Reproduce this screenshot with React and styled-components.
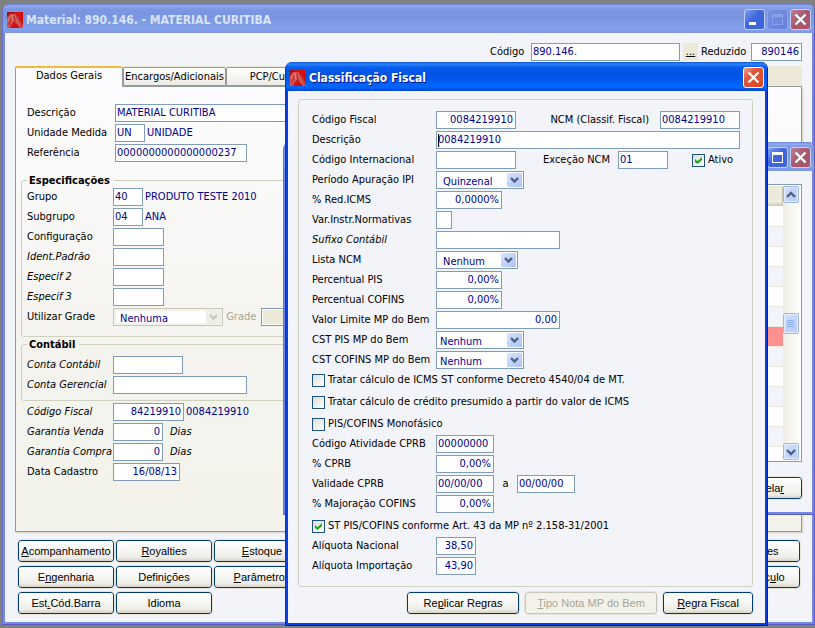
import React from "react";
import styled, { createGlobalStyle, css } from "styled-components";

const GlobalStyle = createGlobalStyle`
  * {
    box-sizing: border-box;
  }

  body {
    margin: 0;
    background: #808080;
    color: #000;
    font: 11px/18px "DejaVu Sans Condensed", "DejaVu Sans", sans-serif;
  }

  input, select, button {
    font: inherit;
    margin: 0;
  }
`;

const Desktop = styled.div`
  position: relative;
  min-height: 100vh;
  overflow: hidden;
`;

const activeFrame = css`
  background: #0a3fe0;
  border-color: #0831d9 #001ea0 #001ea0 #0831d9;
`;

const inactiveFrame = css`
  background: #7489e0;
  border-color: #7b8ee0 #5a5cc0 #5a5cc0 #6a72cc;
`;

const WindowFrame = styled.section`
  position: absolute;
  top: ${(p) => p.$top}px;
  left: ${(p) => p.$left}px;
  right: ${(p) => p.$right}px;
  border-style: solid;
  border-width: 0 1px 1px 1px;
  padding: 0 2px 2px 2px;
  border-radius: 7px 7px 0 0;
  ${(p) => (p.$active ? activeFrame : inactiveFrame)}
`;

const TitleBar = styled.header`
  display: flex;
  align-items: center;
  gap: 2px;
  height: 29px;
  margin: 0 -2px;
  padding: 2px 3px 0 4px;
  border-radius: 6px 6px 0 0;
  color: ${(p) => (p.$active ? "#fff" : "#d8e4f8")};
  text-shadow: ${(p) => (p.$active ? "1px 1px 0 #0f1089" : "none")};
  background: ${(p) =>
    p.$active
      ? "linear-gradient(#0a4fd0 0, #2a86f8 2px, #0a5ff0 5px, #0054e3 10px, #0058ea 17px, #0066ff 24px, #0062f5 26px, #0042c8 29px)"
      : "linear-gradient(#6a80d8 0, #93aaee 2px, #7f97e2 5px, #7a94df 12px, #7f9ce6 19px, #84a4ea 24px, #7f96e6 29px)"};
`;

const WindowTitle = styled.h1`
  flex: 1;
  margin: 0 0 0 1px;
  font-size: 12px;
  font-weight: bold;
  white-space: nowrap;
`;

const WindowBody = styled.div`
  background: #f3f3fa;
  padding: ${(p) => p.$pad};
`;

const captionColors = {
  blue: "linear-gradient(135deg, #7f9ff4, #3f66dc 45%, #3a62dc)",
  faded: "linear-gradient(135deg, #7890e4, #6680dc)",
  dull: "linear-gradient(135deg, #bd7f98, #a8566a 50%, #a8586c)",
  red: "linear-gradient(135deg, #f0a088, #e0553a 35%, #da4420)",
};

const CaptionButton = styled.button`
  display: block;
  width: 21px;
  height: 21px;
  padding: 0;
  border: 1px solid ${(p) => (p.$tone === "faded" ? "#8ea4ea" : p.$tone === "red" ? "#fff" : "#c3cff5")};
  border-radius: 3px;
  background: ${(p) => captionColors[p.$tone]};

  svg {
    display: block;
  }
`;

const Field = styled.input`
  display: block;
  flex: none;
  width: ${(p) => (p.$width ? `${p.$width}px` : "auto")};
  ${(p) => p.$grow && "flex: 1; min-width: 0;"}
  height: 18px;
  padding: 0 2px 0 1px;
  border: 1px solid #7f9db9;
  border-radius: 0;
  outline: none;
  background: ${(p) => (p.disabled ? "#ece9d8" : "#fff")};
  ${(p) => p.disabled && "box-shadow: inset 0 0 0 1px #fff;"}
  ${(p) =>
    p.$caret &&
    "background: linear-gradient(90deg, #000 1px, #f0e040 1px) 1px 2px / 2px 13px no-repeat #fff;"}
  color: #000090;
  text-align: ${(p) => (p.$end ? "right" : "left")};
`;

const Label = styled.label`
  flex: none;
  width: ${(p) => (p.$width ? `${p.$width}px` : "auto")};
  font-style: ${(p) => (p.$italic ? "italic" : "normal")};
  color: ${(p) => (p.$muted ? "#a5a596" : "#000")};
  white-space: nowrap;
`;

const Value = styled.span`
  margin-left: 2px;
  color: #000090;
  white-space: nowrap;
`;

const Unit = styled.span`
  margin-left: 7px;
  font-style: italic;
`;

const RangeWord = styled.label`
  width: 23px;
  text-align: center;
`;

const Row = styled.div`
  display: flex;
  align-items: center;
  height: 18px;
`;

const Stack = styled.div`
  display: flex;
  flex-direction: column;
  gap: 2px;
`;

const SelectBox = styled.span`
  position: relative;
  flex: none;
  width: ${(p) => p.$width}px;
  height: 18px;

  select {
    appearance: none;
    display: block;
    width: 100%;
    height: 18px;
    padding: 1px 18px 0 ${(p) => p.$indent}px;
    border: 1px solid ${(p) => (p.$off ? "#c9c7ba" : "#7f9db9")};
    border-radius: 0;
    outline: none;
    background: #fff;
    ${(p) => p.$off && "box-shadow: inset 0 0 0 2px #f2f1ea;"}
    color: #000090;
    opacity: 1;
  }

  svg {
    position: absolute;
    top: 2px;
    right: 2px;
    pointer-events: none;
  }
`;

const CheckLabel = styled.label`
  display: flex;
  align-items: center;
  gap: 3px;
  height: 18px;
  margin-top: ${(p) => (p.$spaced ? 2 : 0)}px;
  margin-left: ${(p) => (p.$width ? 16 : 0)}px;
  width: ${(p) => (p.$width ? `${p.$width}px` : "auto")};
  white-space: nowrap;
`;

const CheckMark = styled.span`
  position: relative;
  flex: none;
  width: 13px;
  height: 13px;

  input {
    appearance: none;
    display: block;
    width: 13px;
    height: 13px;
    border: 1px solid #1c5180;
    background: linear-gradient(135deg, #dcdcd7, #fff);
  }

  svg {
    position: absolute;
    top: 3px;
    left: 3px;
    display: none;
    pointer-events: none;
  }

  input:checked + svg {
    display: block;
  }
`;

const PushButton = styled.button`
  width: ${(p) => (p.$width ? `${p.$width}px` : "auto")};
  height: 22px;
  padding: 0;
  border: 1px solid ${(p) => (p.disabled ? "#c9c7ba" : "#003c74")};
  border-radius: 3px;
  outline: 1px solid #e6e3d8;
  background: ${(p) =>
    p.disabled ? "#f3f2ea" : "linear-gradient(#fff, #f3f3ef 60%, #ecebe6 85%, #d6d0c5)"};
  color: ${(p) => (p.disabled ? "#a5a596" : "#000")};
  font: 11px/18px "Liberation Sans", Arial, sans-serif;
  white-space: nowrap;
`;

const FirstColumn = styled(PushButton)`
  grid-column: 1;
`;

const LastColumn = styled(PushButton)`
  grid-column: 8;
  grid-row: ${(p) => p.$row};
`;

const Group = styled.fieldset`
  min-width: 0;
  margin: ${(p) => p.$before || 0}px 0 ${(p) => p.$after || 0}px;
  padding: ${(p) => p.$pad};
  border: 1px solid #d0d0bf;
  border-radius: 3px;

  legend {
    padding: 0 4px 0 2px;
    height: 15px;
    line-height: 15px;
    font-weight: bold;
  }
`;

const CodeRow = styled.div`
  display: flex;
  align-items: center;
  justify-content: flex-end;
  height: 18px;
`;

const LookupButton = styled.button`
  width: 15px;
  height: 18px;
  margin: 0 3px;
  padding: 0;
  border: 0;
  background: #ece9d8;
  text-decoration: underline;
`;

const TabStrip = styled.div`
  display: flex;
  align-items: flex-end;
  height: 20px;
  margin-top: 5px;
  background: #ece9d8;
`;

const Tab = styled.button`
  position: relative;
  width: ${(p) => p.$width}px;
  height: ${(p) => (p.$active ? 21 : 19)}px;
  margin-bottom: ${(p) => (p.$active ? -1 : 0)}px;
  padding: 0 0 ${(p) => (p.$active ? 4 : 0)}px;
  border: 1px solid #919b9c;
  border-bottom: ${(p) => (p.$active ? "0" : "1px solid #919b9c")};
  border-top: ${(p) => (p.$active ? "2px solid #f9b83a" : "1px solid #919b9c")};
  border-radius: ${(p) => (p.$active ? "3px 3px 0 0" : "2px 2px 0 0")};
  background: ${(p) => (p.$active ? "#fcfcfe" : "linear-gradient(#fff, #ecebe6)")};
  line-height: 15px;
`;

const TabPanel = styled.div`
  min-height: 446px;
  padding: 17px 6px 0 5px;
  border: 1px solid #919b9c;
  box-shadow: 1px 1px 0 #dedccf, 2px 2px 0 #ece9d8;
  background: linear-gradient(#fcfcfe, #f4f3ee 60%, #f3f3ec);
`;

const Inset = styled.div`
  padding-left: 6px;
`;

const ButtonGrid = styled.div`
  display: grid;
  grid-template-columns: repeat(8, 1fr);
  gap: 4px 2px;
  margin: 8px 2px 0 3px;
`;

const SideGroup = styled.div`
  display: flex;
  align-items: center;
  justify-content: flex-end;
  gap: ${(p) => p.$gap}px;
  margin-left: auto;
`;

const ButtonBar = styled.footer`
  display: flex;
  justify-content: flex-end;
  gap: 6px;
`;

const ListFooter = styled(ButtonBar)`
  margin-top: 15px;
`;

const ListBox = styled.div`
  display: flex;
  height: 278px;
  padding: 1px;
  border: 1px solid #7f9db9;
  background: #fff;
  overflow: hidden;
`;

const Grid = styled.table`
  flex: 1;
  border-collapse: collapse;
  align-self: flex-start;

  th {
    height: 20px;
    padding: 0;
    background: linear-gradient(#ebeadb 80%, #cbc7b8);
    border-right: 1px solid #c7c5b2;
  }

  td {
    height: 20px;
    padding: 0;
    border-bottom: 1px solid #ebe9df;
  }
`;

const GridRow = styled.tr`
  background: ${(p) => (p.$marked ? "#ff9090" : p.$odd ? "#f3f3fa" : "#fff")};
`;

const ScrollTrack = styled.div`
  display: flex;
  flex-direction: column;
  justify-content: space-between;
  width: 17px;
  background: linear-gradient(90deg, #eeede5, #fefefb);
`;

const ScrollButton = styled.button`
  display: block;
  width: 16px;
  height: ${(p) => p.$height}px;
  padding: 0;
  border: 1px solid #9db6ee;
  border-radius: 2px;
  box-shadow: inset 0 0 0 1px #e6edff;
  background: linear-gradient(135deg, #d3e0ff, #b5c9f8);

  svg {
    display: block;
    margin: 0 auto;
  }
`;

function AppLogo() {
  return (
    <svg width="16" height="16" viewBox="0 0 16 16" aria-hidden="true">
      <defs>
        <linearGradient id="logoRed" x1="0" y1="0" x2="1" y2="0.6">
          <stop offset="0" stopColor="#8c1414" />
          <stop offset="0.5" stopColor="#d81414" />
          <stop offset="1" stopColor="#c80c10" />
        </linearGradient>
      </defs>
      <rect width="16" height="16" fill="url(#logoRed)" />
      <path d="M0 6L3 2L8 2L11 5L16 14V16H13L8 10L5 12L3 16H0Z" fill="#d85050" />
      <path d="M1 9L4 4M5 3L6 9M8 4L14 14" fill="none" stroke="#e88878" strokeWidth="1" />
      <path d="M4 5L2 13M7 4L8 9L4 14M9 4L15 15" fill="none" stroke="#a01c1c" strokeWidth="0.8" />
    </svg>
  );
}

function CaptionIcon({ kind }) {
  return (
    <svg width="19" height="19" viewBox="0 0 19 19" aria-hidden="true">
      {kind === "min" && <rect x="4" y="12" width="7" height="3" fill="#fff" />}
      {kind === "max" && <path d="M4 4H15V15H4ZM5 7V14H14V7Z" fill="#fff" fillRule="evenodd" />}
      {kind === "maxOff" && <path d="M4 4H15V15H4ZM5 7V14H14V7Z" fill="#8ba2ea" fillRule="evenodd" />}
      {kind === "close" && <path d="M4.500 4.500L14.500 14.500M14.500 4.500L4.500 14.500" stroke="#fff" strokeWidth="2.400" />}
    </svg>
  );
}

function Chevron({ up }) {
  return (
    <svg width="14" height="14" viewBox="0 0 14 14" aria-hidden="true">
      <path
        d={up ? "M3 9L7 5L11 9" : "M3 5L7 9L11 5"}
        fill="none"
        stroke="#4d6185"
        strokeWidth="2.400"
      />
    </svg>
  );
}

function Select({ id, width, indent = 6, off, value }) {
  return (
    <SelectBox $width={width} $indent={indent} $off={off}>
      <select id={id} defaultValue={value} disabled={off}>
        <option>{value}</option>
      </select>
      <svg width="15" height="14" viewBox="0 0 15 14" aria-hidden="true">
        <defs>
          <linearGradient id="dropFace" x1="0" y1="0" x2="1" y2="1">
            <stop offset="0" stopColor="#d6e2ff" />
            <stop offset="1" stopColor="#adc3f5" />
          </linearGradient>
        </defs>
        <rect width="15" height="14" rx="1" fill={off ? "#f0efe7" : "url(#dropFace)"} />
        <path
          d="M4 5L7.500 8.500L11 5"
          fill="none"
          stroke={off ? "#c9c7ba" : "#4d6185"}
          strokeWidth="2.400"
        />
      </svg>
    </SelectBox>
  );
}

function Check({ children, checked, ...rest }) {
  return (
    <CheckLabel {...rest}>
      <CheckMark>
        <input type="checkbox" defaultChecked={checked} />
        <svg width="7" height="7" viewBox="0 0 7 7" aria-hidden="true">
          <path d="M0 2L2.500 4.200L7 0V3L2.500 7L0 5Z" fill="#21a121" />
        </svg>
      </CheckMark>
      {children}
    </CheckLabel>
  );
}

function FormRow({ id, label, labelWidth, italic, width, value = "", end, grow, caret, after }) {
  return (
    <Row>
      <Label htmlFor={id} $width={labelWidth} $italic={italic}>
        {label}
      </Label>
      <Field id={id} $width={width} $end={end} $grow={grow} $caret={caret} defaultValue={value} />
      {after}
    </Row>
  );
}

function MaterialWindow() {
  return (
    <WindowFrame $top={4} $left={2} $right={0}>
      <TitleBar>
        <AppLogo />
        <WindowTitle>Material: 890.146. - MATERIAL CURITIBA</WindowTitle>
        <CaptionButton $tone="blue" aria-label="Minimizar"><CaptionIcon kind="min" /></CaptionButton>
        <CaptionButton $tone="faded" aria-label="Maximizar"><CaptionIcon kind="maxOff" /></CaptionButton>
        <CaptionButton $tone="dull" aria-label="Fechar"><CaptionIcon kind="close" /></CaptionButton>
      </TitleBar>
      <WindowBody $pad="10px 10px 8px">
        <CodeRow>
          <Label htmlFor="codigo" $width={41}>Código</Label>
          <Field id="codigo" $width={149} defaultValue="890.146." />
          <LookupButton>...</LookupButton>
          <Label htmlFor="reduzido" $width={50}>Reduzido</Label>
          <Field id="reduzido" $width={51} $end defaultValue="890146" />
        </CodeRow>
        <TabStrip>
          <Tab $active $width={108}>Dados Gerais</Tab>
          <Tab $width={103}>Encargos/Adicionais</Tab>
          <Tab $width={103}>PCP/Custos</Tab>
        </TabStrip>
        <TabPanel>
          <Inset>
            <Stack>
              <FormRow id="descricao" label="Descrição" labelWidth={88} width={400} value="MATERIAL CURITIBA" />
              <FormRow id="unidade" label="Unidade Medida" labelWidth={88} width={30} value="UN" after={<Value>UNIDADE</Value>} />
              <FormRow id="referencia" label="Referência" labelWidth={88} width={132} value="0000000000000000237" />
            </Stack>
          </Inset>
          <Group $before={11} $pad="0 4px 10px 5px">
            <legend>Especificações</legend>
            <Stack>
              <FormRow id="grupo" label="Grupo" labelWidth={86} width={30} value="40" after={<Value>PRODUTO TESTE 2010</Value>} />
              <FormRow id="subgrupo" label="Subgrupo" labelWidth={86} width={30} value="04" after={<Value>ANA</Value>} />
              <FormRow id="config" label="Configuração" labelWidth={86} width={51} />
              <FormRow id="ident" label="Ident.Padrão" labelWidth={86} italic width={51} />
              <FormRow id="espec2" label="Especif 2" labelWidth={86} italic width={51} />
              <FormRow id="espec3" label="Especif 3" labelWidth={86} italic width={51} />
              <Row>
                <Label htmlFor="utilizar" $width={86}>Utilizar Grade</Label>
                <Select id="utilizar" width={110} off value="Nenhuma" />
                <Label htmlFor="grade" $width={38} $muted>&nbsp;Grade</Label>
                <Field id="grade" $width={60} disabled />
              </Row>
            </Stack>
          </Group>
          <Group $after={2} $pad="4px 4px 6px 5px">
            <legend>Contábil</legend>
            <Stack>
              <FormRow id="contaContabil" label="Conta Contábil" labelWidth={86} italic width={70} />
              <FormRow id="contaGerencial" label="Conta Gerencial" labelWidth={86} italic width={134} />
            </Stack>
          </Group>
          <Inset>
            <Stack>
              <FormRow id="fiscal" label="Código Fiscal" labelWidth={86} italic width={71} end value="84219910" after={<Value>0084219910</Value>} />
              <FormRow id="venda" label="Garantia Venda" labelWidth={86} italic width={50} end value="0" after={<Unit>Dias</Unit>} />
              <FormRow id="compra" label="Garantia Compra" labelWidth={86} italic width={50} end value="0" after={<Unit>Dias</Unit>} />
              <FormRow id="cadastro" label="Data Cadastro" labelWidth={86} width={67} end value="16/08/13" />
            </Stack>
          </Inset>
        </TabPanel>
        <ButtonGrid>
          <PushButton><u>A</u>companhamento</PushButton>
          <PushButton><u>R</u>oyalties</PushButton>
          <PushButton><u>E</u>stoque</PushButton>
          <LastColumn $row={1}>Aplicações</LastColumn>
          <FirstColumn>E<u>n</u>genharia</FirstColumn>
          <PushButton>Defini<u>ç</u>ões</PushButton>
          <PushButton><u>P</u>arâmetros</PushButton>
          <LastColumn $row={2}>Form.Cálc<u>u</u>lo</LastColumn>
          <FirstColumn>Est<u>.</u>Cód.Barra</FirstColumn>
          <PushButton>Idioma</PushButton>
        </ButtonGrid>
      </WindowBody>
    </WindowFrame>
  );
}

function ListWindow() {
  return (
    <WindowFrame $top={142} $left={283} $right={0}>
      <TitleBar>
        <WindowTitle />
        <CaptionButton $tone="blue" aria-label="Maximizar"><CaptionIcon kind="max" /></CaptionButton>
        <CaptionButton $tone="dull" aria-label="Fechar"><CaptionIcon kind="close" /></CaptionButton>
      </TitleBar>
      <WindowBody $pad="13px 10px 13px">
        <ListBox>
          <Grid>
            <thead>
              <tr><th /></tr>
            </thead>
            <tbody>
              {Array.from({ length: 13 }, (_, i) => (
                <GridRow key={i} $odd={i % 2 === 1} $marked={i === 6}>
                  <td />
                </GridRow>
              ))}
            </tbody>
          </Grid>
          <ScrollTrack>
            <ScrollButton $height={17} aria-label="Subir"><Chevron up /></ScrollButton>
            <ScrollButton $height={21} aria-label="Rolar">
              <svg width="8" height="9" viewBox="0 0 8 9" aria-hidden="true">
                <path d="M0 1.500H7M0 3.500H7M0 5.500H7M0 7.500H7" stroke="#8cb0f8" />
              </svg>
            </ScrollButton>
            <ScrollButton $height={17} aria-label="Descer"><Chevron /></ScrollButton>
          </ScrollTrack>
        </ListBox>
        <ListFooter>
          <PushButton $width={80}>Cancela<u>r</u></PushButton>
        </ListFooter>
      </WindowBody>
    </WindowFrame>
  );
}

function FiscalDialog() {
  return (
    <WindowFrame as="form" role="dialog" $active $top={62} $left={285} $right={47}>
      <TitleBar $active>
        <AppLogo />
        <WindowTitle>Classificação Fiscal</WindowTitle>
        <CaptionButton type="button" $tone="red" aria-label="Fechar"><CaptionIcon kind="close" /></CaptionButton>
      </TitleBar>
      <WindowBody $pad="8px 12px 9px 10px">
        <Group $after={5} $pad="11px 12px 11px 13px">
          <Stack>
            <FormRow
              id="dFiscal" label="Código Fiscal" labelWidth={124} width={80} end value="0084219910"
              after={
                <SideGroup $gap={11}>
                  <Label htmlFor="ncm">NCM (Classif. Fiscal)</Label>
                  <Field id="ncm" $width={80} defaultValue="0084219910" />
                </SideGroup>
              }
            />
            <FormRow id="dDescricao" label="Descrição" labelWidth={124} grow caret value="0084219910" />
            <FormRow
              id="dInternacional" label="Código Internacional" labelWidth={124} width={80}
              after={
                <SideGroup $gap={8}>
                  <Label htmlFor="excecao">Exceção NCM</Label>
                  <Field id="excecao" $width={50} defaultValue="01" />
                  <Check checked $width={48}>Ativo</Check>
                </SideGroup>
              }
            />
            <Row>
              <Label htmlFor="periodo" $width={124}>Período Apuração IPI</Label>
              <Select id="periodo" width={88} value="Quinzenal" />
            </Row>
            <FormRow id="redIcms" label="% Red.ICMS" labelWidth={124} width={66} end value="0,0000%" />
            <FormRow id="varInstr" label="Var.Instr.Normativas" labelWidth={124} width={16} />
            <FormRow id="sufixo" label="Sufixo Contábil" labelWidth={124} italic width={124} />
            <Row>
              <Label htmlFor="lista" $width={124}>Lista NCM</Label>
              <Select id="lista" width={82} value="Nenhum" />
            </Row>
            <FormRow id="pis" label="Percentual PIS" labelWidth={124} width={66} end value="0,00%" />
            <FormRow id="cofins" label="Percentual COFINS" labelWidth={124} width={66} end value="0,00%" />
            <FormRow id="limite" label="Valor Limite MP do Bem" labelWidth={124} width={124} end value="0,00" />
            <Row>
              <Label htmlFor="cstPis" $width={124}>CST PIS MP do Bem</Label>
              <Select id="cstPis" width={88} indent={3} value="Nenhum" />
            </Row>
            <Row>
              <Label htmlFor="cstCofins" $width={124}>CST COFINS MP do Bem</Label>
              <Select id="cstCofins" width={88} indent={3} value="Nenhum" />
            </Row>
            <Check>Tratar cálculo de ICMS ST conforme Decreto 4540/04 de MT.</Check>
            <Check $spaced>Tratar cálculo de crédito presumido a partir do valor de ICMS</Check>
            <Check $spaced>PIS/COFINS Monofásico</Check>
            <FormRow id="atividade" label="Código Atividade CPRB" labelWidth={124} width={58} value="00000000" />
            <FormRow id="cprb" label="% CPRB" labelWidth={124} width={58} end value="0,00%" />
            <FormRow
              id="validade" label="Validade CPRB" labelWidth={124} width={58} value="00/00/00"
              after={
                <>
                  <RangeWord htmlFor="validadeFim">a</RangeWord>
                  <Field id="validadeFim" $width={58} defaultValue="00/00/00" />
                </>
              }
            />
            <FormRow id="majoracao" label="% Majoração COFINS" labelWidth={124} width={58} end value="0,00%" />
            <Check checked $spaced>ST PIS/COFINS conforme Art. 43 da MP nº 2.158-31/2001</Check>
            <FormRow id="nacional" label="Alíquota Nacional" labelWidth={124} width={40} end value="38,50" />
            <FormRow id="importacao" label="Alíquota Importação" labelWidth={124} width={40} end value="43,90" />
          </Stack>
        </Group>
        <ButtonBar>
          <PushButton type="button" $width={112}>Re<u>p</u>licar Regras</PushButton>
          <PushButton type="button" $width={132} disabled><u>T</u>ipo Nota MP do Bem</PushButton>
          <PushButton type="button" $width={90}><u>R</u>egra Fiscal</PushButton>
        </ButtonBar>
      </WindowBody>
    </WindowFrame>
  );
}

export default function App() {
  return (
    <Desktop>
      <GlobalStyle />
      <MaterialWindow />
      <ListWindow />
      <FiscalDialog />
    </Desktop>
  );
}
